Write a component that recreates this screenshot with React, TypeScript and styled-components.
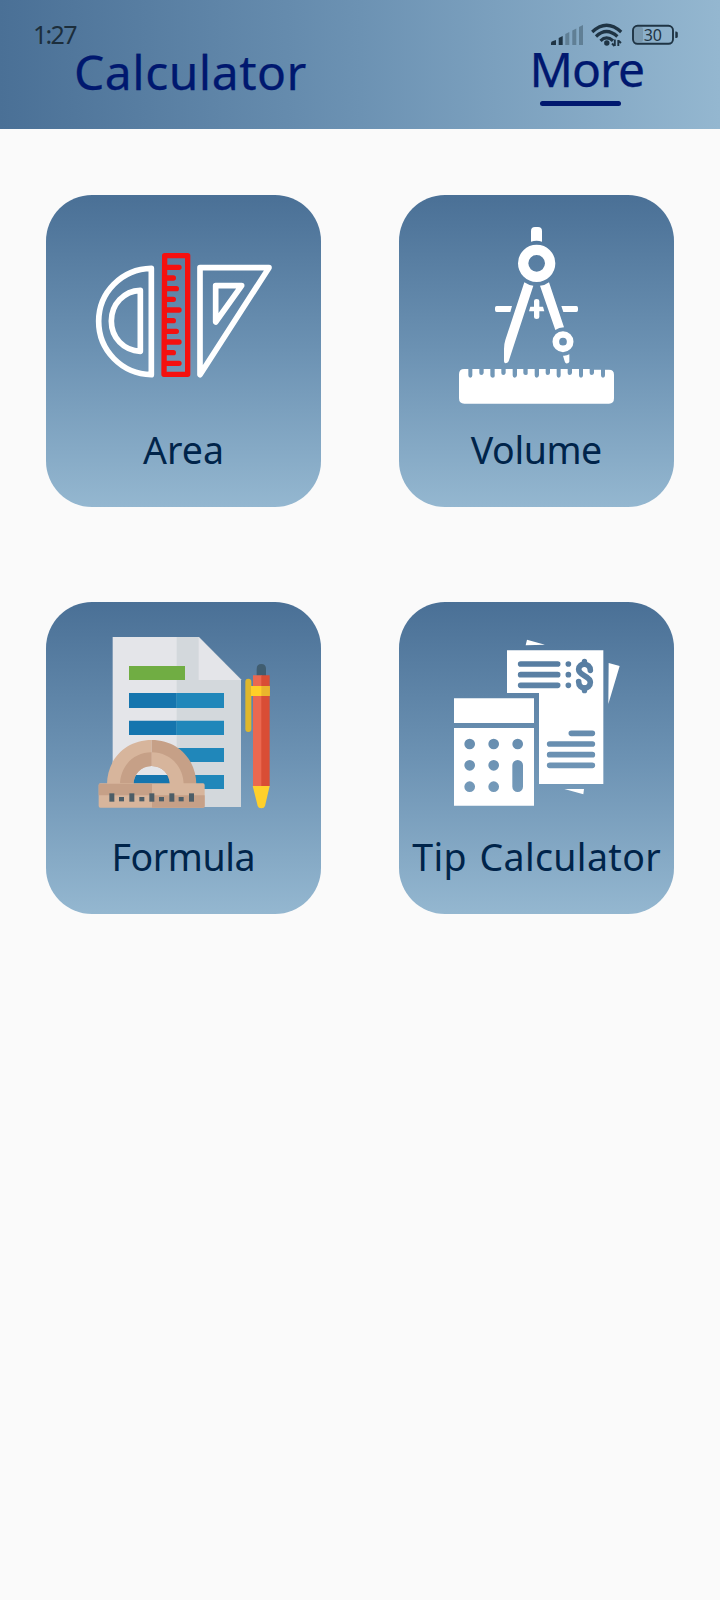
import React from 'react';
import styled, { createGlobalStyle } from 'styled-components';

const GlobalStyle = createGlobalStyle`
  * { box-sizing: border-box; }
  body {
    margin: 0;
    background: #fafafa;
    font-family: "Noto Sans", "Open Sans", sans-serif;
  }
`;

const Screen = styled.div`
  width: 720px;
  height: 1600px;
  overflow: hidden;
  background: #fafafa;
`;

const Header = styled.header`
  height: 128.5px;
  background: linear-gradient(to right, #4a7096 0%, #6c92b3 50%, #94b7d0 100%);
`;

const StatusBar = styled.div`
  display: flex;
  justify-content: space-between;
  align-items: flex-start;
  height: 48px;
  padding: 21px 41px 0 33px;
  color: #1c2e3c;
`;

const Clock = styled.span`
  font-size: 25px;
  line-height: 26px;
  letter-spacing: -1.7px;
`;

const StatusIcons = styled.svg`
  display: block;
  width: 130px;
  height: 26px;
  margin-top: 1px;
`;

const Tabs = styled.nav`
  display: flex;
  justify-content: space-between;
  align-items: flex-start;
  padding: 1px 76px 0 74px;
`;

const Tab = styled.div<{ $lift?: number; $spacing: number }>`
  display: flex;
  flex-direction: column;
  margin-top: ${(p) => -(p.$lift ?? 0)}px;
  font-size: 48px;
  line-height: 46px;
  letter-spacing: ${(p) => p.$spacing}px;
  color: #00186f;
  -webkit-text-stroke: 0.25px #00186f;
  white-space: nowrap;
`;

const Indicator = styled.span`
  width: 81px;
  height: 5.5px;
  margin: 8.5px 0 0 11px;
  border-radius: 3px;
  background: #00186f;
`;

const Grid = styled.main`
  display: grid;
  grid-template-columns: 275px 275px;
  grid-auto-rows: 312px;
  column-gap: 78px;
  row-gap: 95px;
  padding: 66.5px 46px 0;
`;

const Card = styled.section`
  display: flex;
  flex-direction: column;
  align-items: center;
  border-radius: 46px;
  background: linear-gradient(to bottom, #4a7096 0%, #6c92b3 50%, #94b7d0 100%);
`;

const Art = styled.svg`
  display: block;
  flex: none;
  width: 275px;
  height: 230px;
`;

const Label = styled.span<{ $spacing: number }>`
  margin-top: -1px;
  font-size: 37.5px;
  line-height: 52px;
  letter-spacing: ${(p) => p.$spacing}px;
  word-spacing: 2.5px;
  margin-right: ${(p) => -p.$spacing}px;
  color: #00244a;
  white-space: nowrap;
`;

const AreaArt = () => (
  <Art viewBox="48 45 825 690" fill="none" strokeLinejoin="round" strokeLinecap="round">
    <g stroke="#fff" strokeWidth="17">
      <path d="M364 265V584C275 582 206 511 206 424S275 267 364 265Z" />
      <path d="M331 331V514C281 512 244 473 244 423S281 333 331 331Z" />
      <path d="M510 263H717L510 584Z" />
      <path d="M557 317H635L557 426Z" />
    </g>
    <g stroke="#f5100f" strokeWidth="16">
      <path d="M404 227H473V583H402Z" />
      <path d="M406 262H447M406 294H430M406 326H439M406 358H430M406 390H447M406 422H430M406 454H439M406 486H447M406 518H430M406 550H447" />
    </g>
  </Art>
);

const VolumeArt = () => (
  <Art viewBox="42 45 825 690" fill="#fff">
    <path d="M438 185V153Q438 141 450 141H459Q471 141 471 153V185Q455 179 438 185Z" />
    <circle cx="455" cy="250" r="40.5" fill="none" stroke="#fff" strokeWidth="31" />
    <path d="M418 307Q431 316 445 317L371 544Q368 550 361 550Q357 549 357 544V507Q357 492 361 480Z" />
    <path d="M465 317Q481 316 492 307L537 442Q522 443 511 450Z" />
    <path d="M335 378H381L376 396H335Q330 396 330 390V384Q330 378 335 378ZM529 378H574Q579 378 579 384V390Q579 396 574 396H535Z" />
    <path d="M447 363Q447 357 455 357T463 363V380H474L478 394H463V411Q463 417 455 417T447 411V394H432L436 380H447Z" />
    <circle cx="534" cy="485" r="21.5" fill="none" stroke="#fff" strokeWidth="20" />
    <path d="M534 527Q544 528 553 523V545Q551 551 543 550Q540 549 539 544Z" />
    <path d="M238 567H250V586Q250 593 256 593T262 586V567H283V579Q283 585 289 585T296 579V567H316V586Q316 593 323 593T329 586V567H349V579Q349 585 355 585T362 579V567H383V586Q383 593 389 593T396 586V567H415V579Q415 585 422 585T428 579V567H449V586Q449 593 455 593T462 586V567H482V579Q482 585 488 585T495 579V567H515V586Q515 593 521 593T527 586V567H548V579Q548 585 554 585T561 579V567H582V586Q582 593 588 593T594 586V567H614V579Q614 585 620 585T627 579V569H648V586Q648 593 654 593T660 586V569H672Q687 569 687 584V655Q687 671 672 671H238Q222 671 222 655V583Q222 567 238 567Z" />
  </Art>
);

const FormulaArt = () => {
  const ticks = [238, 298, 358, 418, 477];
  const shortTicks = [267, 328, 387, 446];
  return (
    <Art viewBox="48 36 825 690">
      <path fill="#e4e5e9" d="M248 141H444V651H248Z" />
      <path fill="#d3d8dc" d="M440 141H507L633 268V651H440Z" />
      <path fill="#e4e5e9" d="M506 142L633 270H506Z" />
      <path fill="#70ad43" d="M297 228H465V270H297Z" />
      <path fill="#1575ae" d="M297 309H440V354H297ZM297 392H440V435H297ZM297 555H440V597H297Z" />
      <path fill="#2087ba" d="M439 309H582V354H439ZM439 392H582V435H439ZM439 474H582V516H439ZM439 555H582V597H439Z" />
      <path fill="#d7b59c" d="M231 584C231 509 286 450 365 450V528C332 528 311 554 310 584Z" />
      <path fill="#c6a087" d="M365 450C444 450 499 509 499 584H420C419 554 398 528 365 528Z" />
      <path fill="#c6a087" d="M270 584C270 530 310 487 365 487V528C332 528 311 554 310 584Z" />
      <path fill="#d7b59c" d="M365 487C420 487 461 530 461 584H420C419 554 398 528 365 528Z" />
      <rect x="206" y="580" width="318" height="73" rx="5" fill="#d7b59c" />
      <path fill="#c6a087" d="M209 581H366V616H206V584ZM366 616H524V649Q524 653 520 653H366Z" />
      <g fill="#4c5d67">
        {ticks.map((x) => <rect key={x} x={x} y="610" width="15" height="25" />)}
        {shortTicks.map((x) => <rect key={x} x={x} y="621" width="15" height="13" />)}
      </g>
      <path fill="#405d70" d="M680 260V237Q680 222 694 222T708 237V260Z" />
      <path fill="#eb6850" d="M669 256H696V588H669Z" />
      <path fill="#d94d35" d="M694 256H719V588H694Z" />
      <rect x="646" y="266" width="18" height="160" rx="9" fill="#dfb72b" />
      <path fill="#ffcf28" d="M663 288H719V318H663Z" />
      <path fill="#eab52c" d="M694 288H719V318H694Z" />
      <path fill="#ffd02b" d="M668 588H719L705 648Q703 655 694 655T683 648Z" />
    </Art>
  );
};

const TipArt = () => (
  <Art viewBox="42 36 825 690" fill="#fff">
    <defs>
      <mask id="tip-cutouts" maskUnits="userSpaceOnUse" x="42" y="36" width="825" height="690">
        <rect x="42" y="36" width="825" height="690" fill="#fff" />
        <g stroke="#000" strokeWidth="17" strokeLinecap="round" fill="none">
          <path d="M407 222H518M407 254H518M407 286H518M559 430H622M494 462H622M494 494H622M494 526H622" />
          <path d="M550 222H550.1M550 254H550.1M550 286H550.1" />
          <path d="M616 241C616 217 581 217 581 238C581 258 616 256 616 277C616 300 581 300 581 275" />
          <path strokeWidth="16" d="M598.5 214V222M598.5 294V302" />
          <path strokeWidth="32" d="M254 462H254.1M326 462H326.1M398 462H398.1M254 526H254.1M326 526H326.1M254 590H254.1M326 590H326.1M398 526V590" />
        </g>
      </mask>
    </defs>
    <path d="M426 149L480 164L422 166ZM671 219L704 228L670 342ZM538 597H597L595 613Z" />
    <g mask="url(#tip-cutouts)">
      <path d="M366 181H655V582H462V309H366Z" />
      <path d="M207 325H447V399H207ZM207 414H447V647H207Z" />
    </g>
  </Art>
);

const cards = [
  { label: 'Area', Icon: AreaArt, spacing: 0 },
  { label: 'Volume', Icon: VolumeArt, spacing: -0.4 },
  { label: 'Formula', Icon: FormulaArt, spacing: -0.4 },
  { label: 'Tip Calculator', Icon: TipArt, spacing: 0.35 },
];

export default function App() {
  return (
    <>
      <GlobalStyle />
      <Screen>
        <Header>
          <StatusBar>
            <Clock>1:27</Clock>
            <StatusIcons viewBox="0 0 130 26">
              <path fill="#1f3444" d="M2 21Q2 19.5 4 19L7 18V23H2ZM9.7 16L13.7 14V23H9.7Z" />
              <path fill="#607f95" d="M16.3 12L20.3 10V23H16.3ZM23.3 8.5L27.3 6.5V23H23.3ZM30 5L34 3V23H30Z" />
              <g fill="none" stroke="#1f3444" strokeWidth="3.2">
                <path d="M43.2 10Q57.5-3.5 72.2 10" />
                <path d="M47 14.5Q57.5 4.5 68.4 14.5" />
                <path d="M51.5 18.8Q57.5 13 64 18.8" />
                <path strokeWidth="1.9" d="M65.8 17.5V24M69.3 18V24M63 21.5L65.5 24M69.3 18.5L72 21" />
              </g>
              <circle cx="57.8" cy="21" r="2.7" fill="#1f3444" />
              <rect x="84" y="5" width="10" height="15" rx="2" fill="#7999b0" />
              <rect x="84" y="3.8" width="40" height="18" rx="4.5" fill="none" stroke="#1f3444" strokeWidth="1.9" />
              <path fill="#1f3444" d="M126.3 9.5H127Q128.8 9.5 128.8 11V14.5Q128.8 16 127 16H126.3Z" />
              <text x="103.8" y="18.7" textAnchor="middle" fontSize="16" fill="#1f3444">30</text>
            </StatusIcons>
          </StatusBar>
          <Tabs>
            <Tab $spacing={0.5}>Calculator</Tab>
            <Tab $spacing={-1} $lift={3}>
              More
              <Indicator />
            </Tab>
          </Tabs>
        </Header>
        <Grid>
          {cards.map(({ label, Icon, spacing }) => (
            <Card key={label}>
              <Icon />
              <Label $spacing={spacing}>{label}</Label>
            </Card>
          ))}
        </Grid>
      </Screen>
    </>
  );
}
